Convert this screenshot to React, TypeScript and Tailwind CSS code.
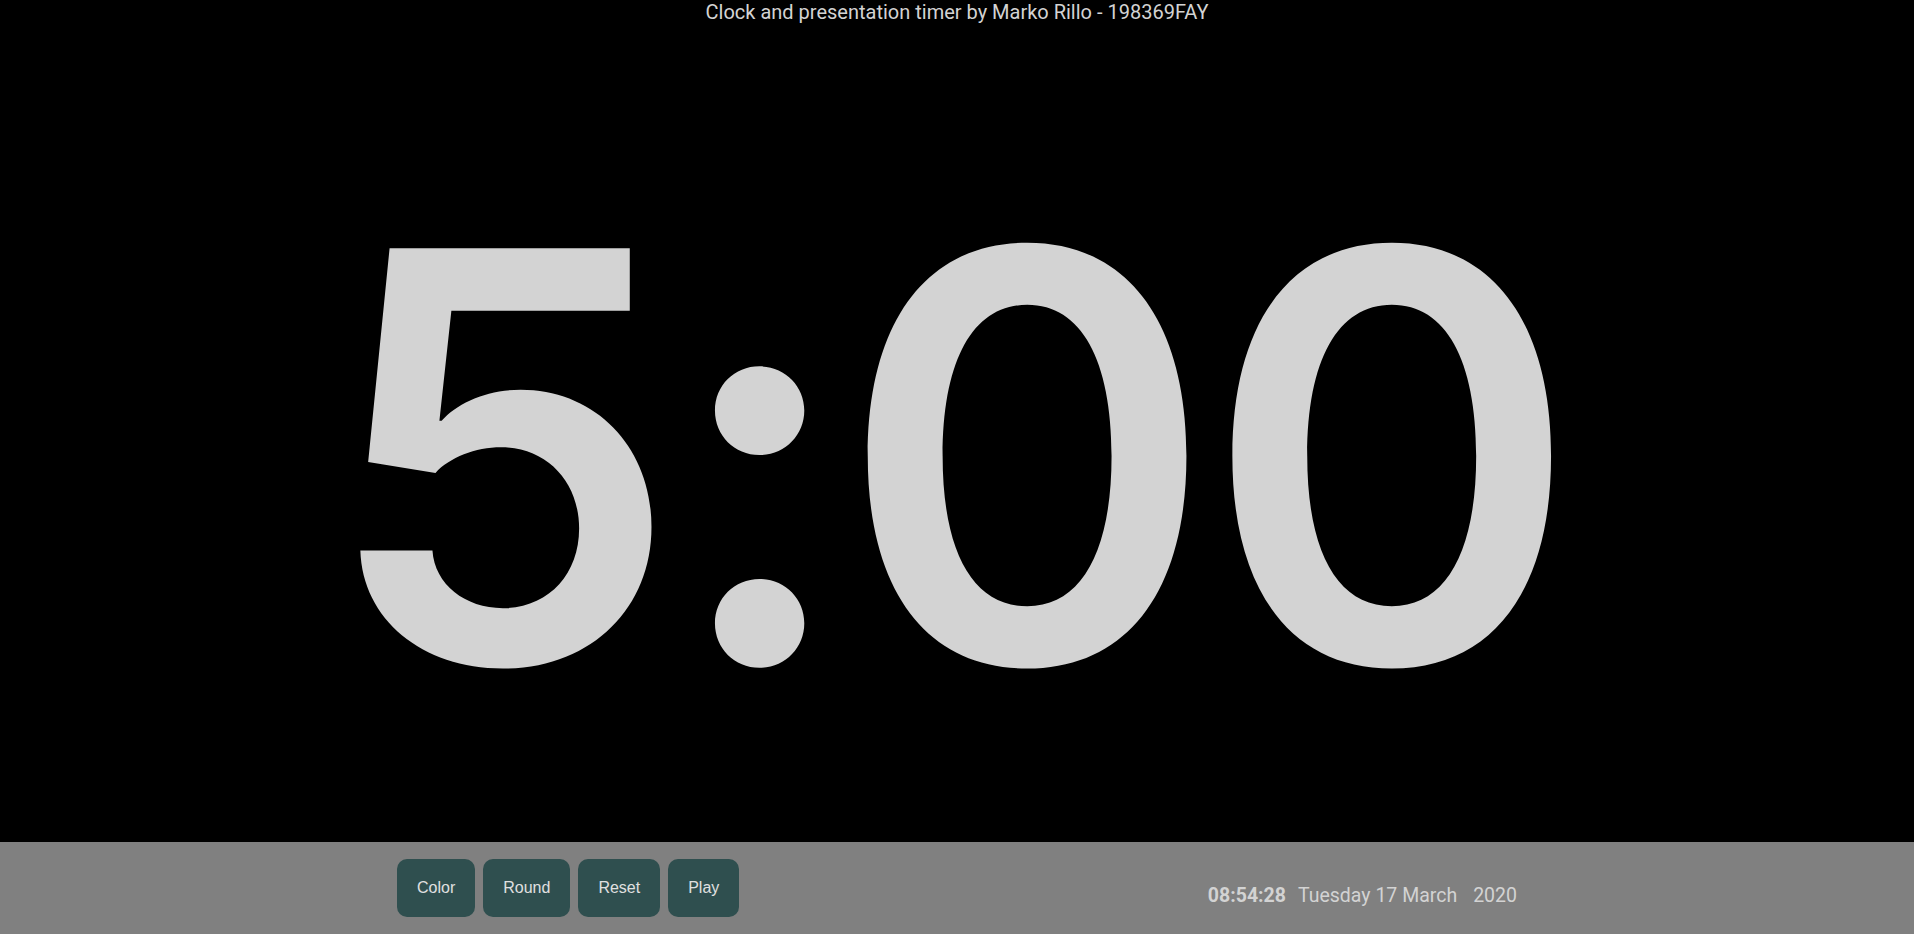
import React from "react";

const buttons = ["Color", "Round", "Reset", "Play"];

export default function App() {
  return (
    <div className="flex h-[934px] w-full flex-col bg-black">
      {/* Title */}
      <div
        className="flex h-[30px] items-start justify-center text-[20px] leading-6 text-[#d3d3d3]"
        style={{ fontFamily: "Roboto, sans-serif" }}
      >
        Clock and presentation timer by Marko Rillo - 198369FAY
      </div>

      {/* Timer */}
      <div className="flex flex-1 items-center justify-center pt-10 pr-6">
        <span
          className="text-[570px] font-semibold leading-none tracking-[-0.02em] text-[#d3d3d3]"
          style={{ fontFamily: "Inter, sans-serif" }}
        >
          5:00
        </span>
      </div>

      {/* Bottom bar */}
      <div className="flex h-[92px] items-center justify-between bg-[#808080] px-[397px]">
        <div className="flex gap-2">
          {buttons.map((b) => (
            <button
              key={b}
              className="rounded-[10px] bg-[#2f4f4f] px-5 py-5 text-[16px] leading-[18px] text-[#e0e0e0]"
              style={{ fontFamily: '"Liberation Sans", Arial, sans-serif' }}
            >
              {b}
            </button>
          ))}
        </div>
        <div
          className="flex items-baseline gap-3 pt-4 text-[19.5px] text-[#d3d3d3]"
          style={{ fontFamily: "Roboto, sans-serif" }}
        >
          <span className="font-bold">08:54:28</span>
          <span>Tuesday 17 March</span>
          <span className="ml-1">2020</span>
        </div>
      </div>
    </div>
  );
}
